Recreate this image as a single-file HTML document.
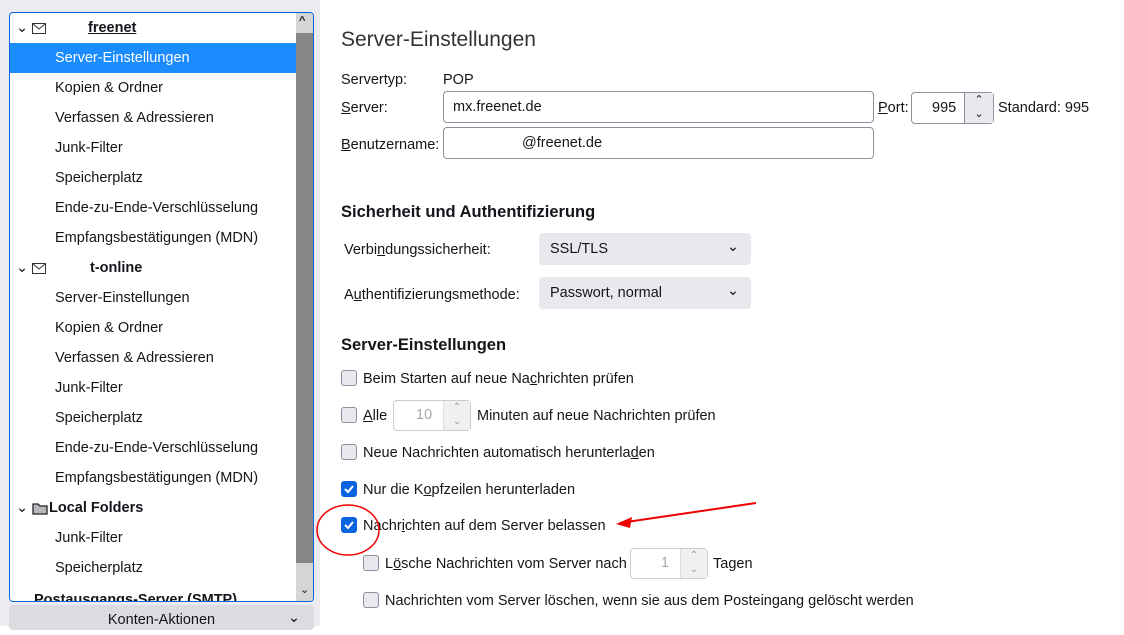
<!DOCTYPE html>
<html><head><meta charset="utf-8"><style>
*{box-sizing:border-box;margin:0;padding:0}
body{width:1124px;height:626px;overflow:hidden;background:#fff;font-family:"Liberation Sans",sans-serif;font-size:14.5px;color:#15141a;position:relative}
.a{position:absolute;white-space:nowrap}
#left{position:absolute;left:0;top:0;width:320px;height:626px;background:#ececf0;font-size:14.5px}
#tree{position:absolute;left:9px;top:12px;width:305px;height:590px;background:#fff;border:1px solid #0a64e0;border-radius:4px;overflow:hidden}
.row{position:absolute;left:0;width:287px;height:30px;line-height:31px}
.sub{padding-left:45px}
.hd{padding-left:40px;font-weight:bold}
.sel{background:#1a8cff;color:#fff}
.sb{position:absolute;right:0;top:0;width:17px;height:588px;background:#d5d5d5}
.thumb{position:absolute;right:0;top:20px;width:17px;height:530px;background:#868686}
.inp{position:absolute;border:1px solid #8f8f9d;border-radius:4px;background:#fff;height:32px;line-height:31px;padding-left:9px}
.sel2{position:absolute;background:#e9e9ed;border-radius:4px;height:32px;line-height:33px;padding-left:11px}
.cb{position:absolute;width:16px;height:16px;border:1px solid #8f8f9d;border-radius:3px;background:#e9e9ed}
.cbc{background:#0a64e0;border-color:#0a64e0}
h2{position:absolute;font-size:16.5px;font-weight:bold}
u{text-decoration:underline}
</style></head><body>
<div id="left">
<div id="tree">
<div class="row hd" style="top:0"><span style="position:absolute;left:6px;font-weight:normal">⌄</span><svg class="a" style="left:22px;top:10px" width="14" height="11"><rect x="0.5" y="0.5" width="13" height="10" fill="none" stroke="#333"/><path d="M1 1 L7 6 L13 1" fill="none" stroke="#333"/></svg><span style="margin-left:38px;text-decoration:underline">freenet</span></div>
<div class="row sub sel" style="top:30px">Server-Einstellungen</div>
<div class="row sub" style="top:60px">Kopien &amp; Ordner</div>
<div class="row sub" style="top:90px">Verfassen &amp; Adressieren</div>
<div class="row sub" style="top:120px">Junk-Filter</div>
<div class="row sub" style="top:150px">Speicherplatz</div>
<div class="row sub" style="top:180px">Ende-zu-Ende-Verschlüsselung</div>
<div class="row sub" style="top:210px">Empfangsbestätigungen (MDN)</div>
<div class="row hd" style="top:240px"><span style="position:absolute;left:6px;font-weight:normal">⌄</span><svg class="a" style="left:22px;top:10px" width="14" height="11"><rect x="0.5" y="0.5" width="13" height="10" fill="none" stroke="#333"/><path d="M1 1 L7 6 L13 1" fill="none" stroke="#333"/></svg><span style="margin-left:40px">t-online</span></div>
<div class="row sub" style="top:270px">Server-Einstellungen</div>
<div class="row sub" style="top:300px">Kopien &amp; Ordner</div>
<div class="row sub" style="top:330px">Verfassen &amp; Adressieren</div>
<div class="row sub" style="top:360px">Junk-Filter</div>
<div class="row sub" style="top:390px">Speicherplatz</div>
<div class="row sub" style="top:420px">Ende-zu-Ende-Verschlüsselung</div>
<div class="row sub" style="top:450px">Empfangsbestätigungen (MDN)</div>
<div class="row hd" style="top:480px;padding-left:39px"><span style="position:absolute;left:6px;font-weight:normal">⌄</span><svg class="a" style="left:22px;top:9px" width="16" height="13"><path d="M1 2h5l2 2h7v8H1z" fill="#b8b8bc" stroke="#222" stroke-width="1.3"/></svg>Local Folders</div>
<div class="row sub" style="top:510px">Junk-Filter</div>
<div class="row sub" style="top:540px">Speicherplatz</div>
<div class="row hd" style="top:572px;padding-left:24px">Postausgangs-Server (SMTP)</div>
<div class="sb"><div class="thumb"></div><span class="a" style="left:3px;top:2px;font-size:11px;font-weight:bold">^</span><span class="a" style="left:4px;top:570px;font-size:11px">⌄</span></div>
</div>
<div class="a" style="left:9px;top:605px;width:305px;height:25px;background:#dcdce0;border-radius:4px;text-align:center;line-height:30px">Konten-Aktionen<span class="a" style="right:14px;top:-2px">⌄</span></div>
</div>

<div class="a" style="left:341px;top:28px;font-size:21px;color:#333">Server-Einstellungen</div>
<div class="a" style="left:341px;top:72px">Servertyp:</div>
<div class="a" style="left:443px;top:72px">POP</div>
<div class="a" style="left:341px;top:100px"><u>S</u>erver:</div>
<div class="inp" style="left:443px;top:91px;width:431px">mx.freenet.de</div>
<div class="a" style="left:878px;top:100px"><u>P</u>ort:</div>
<div class="inp" style="left:911px;top:92px;width:83px;padding-left:20px">995</div>
<div class="a" style="left:964px;top:93px;width:29px;height:30px;background:#e9e9ed;border-left:1px solid #8f8f9d;font-size:11px;text-align:center;line-height:14px">⌃<br>⌄</div>
<div class="a" style="left:998px;top:100px">Standard: 995</div>
<div class="a" style="left:341px;top:137px"><u>B</u>enutzername:</div>
<div class="inp" style="left:443px;top:127px;width:431px;padding-left:78px">@freenet.de</div>
<h2 style="left:341px;top:203px">Sicherheit und Authentifizierung</h2>
<div class="a" style="left:344px;top:242px">Verbi<u>n</u>dungssicherheit:</div>
<div class="sel2" style="left:539px;top:233px;width:212px">SSL/TLS<span class="a" style="right:12px;top:-2px">⌄</span></div>
<div class="a" style="left:344px;top:287px">A<u>u</u>thentifizierungsmethode:</div>
<div class="sel2" style="left:539px;top:277px;width:212px">Passwort, normal<span class="a" style="right:12px;top:-2px">⌄</span></div>
<h2 style="left:341px;top:336px">Server-Einstellungen</h2>
<div class="cb" style="left:341px;top:370px"></div><div class="a" style="left:363px;top:371px">Beim Starten auf neue Na<u>c</u>hrichten prüfen</div>
<div class="cb" style="left:341px;top:407px"></div><div class="a" style="left:363px;top:408px"><u>A</u>lle</div>
<div class="inp" style="left:393px;top:400px;width:78px;height:31px;border-color:#ccc;color:#aaa;padding-left:22px;line-height:29px">10</div>
<div class="a" style="left:443px;top:401px;width:27px;height:29px;background:#f0f0f2;border-left:1px solid #ddd;font-size:10px;color:#999;text-align:center;line-height:14px">⌃<br>⌄</div>
<div class="a" style="left:477px;top:408px">Minuten auf neue Nachrichten prüfen</div>
<div class="cb" style="left:341px;top:444px"></div><div class="a" style="left:363px;top:445px">Neue Nachrichten automatisch herunterla<u>d</u>en</div>
<div class="cb cbc" style="left:341px;top:481px"><svg width="14" height="14" style="position:absolute;left:0;top:0"><path d="M3 7l3 3 5-6" fill="none" stroke="#fff" stroke-width="2"/></svg></div><div class="a" style="left:363px;top:482px">Nur die K<u>o</u>pfzeilen herunterladen</div>
<div class="cb cbc" style="left:341px;top:517px"><svg width="14" height="14" style="position:absolute;left:0;top:0"><path d="M3 7l3 3 5-6" fill="none" stroke="#fff" stroke-width="2"/></svg></div><div class="a" style="left:363px;top:518px">Nachr<u>i</u>chten auf dem Server belassen</div>
<div class="cb" style="left:363px;top:555px"></div><div class="a" style="left:385px;top:556px">L<u>ö</u>sche Nachrichten vom Server nach</div>
<div class="inp" style="left:630px;top:548px;width:78px;height:31px;border-color:#ccc;color:#aaa;padding-left:30px;line-height:29px">1</div>
<div class="a" style="left:680px;top:549px;width:27px;height:29px;background:#f0f0f2;border-left:1px solid #ddd;font-size:10px;color:#999;text-align:center;line-height:14px">⌃<br>⌄</div>
<div class="a" style="left:713px;top:556px">Tagen</div>
<div class="cb" style="left:363px;top:592px"></div><div class="a" style="left:385px;top:593px">Nachrichten vom Server löschen, wenn sie aus dem Posteingang gelöscht werden</div>
<svg class="a" style="left:0;top:0" width="1124" height="626">
<ellipse cx="348" cy="530" rx="31" ry="25" fill="none" stroke="#e00" stroke-width="1.5"/>
<path d="M756 503 L620 523" stroke="#e00" stroke-width="2" fill="none"/>
<path d="M616 524 L632 517 L630 528z" fill="#e00"/>
</svg>
</body></html>
